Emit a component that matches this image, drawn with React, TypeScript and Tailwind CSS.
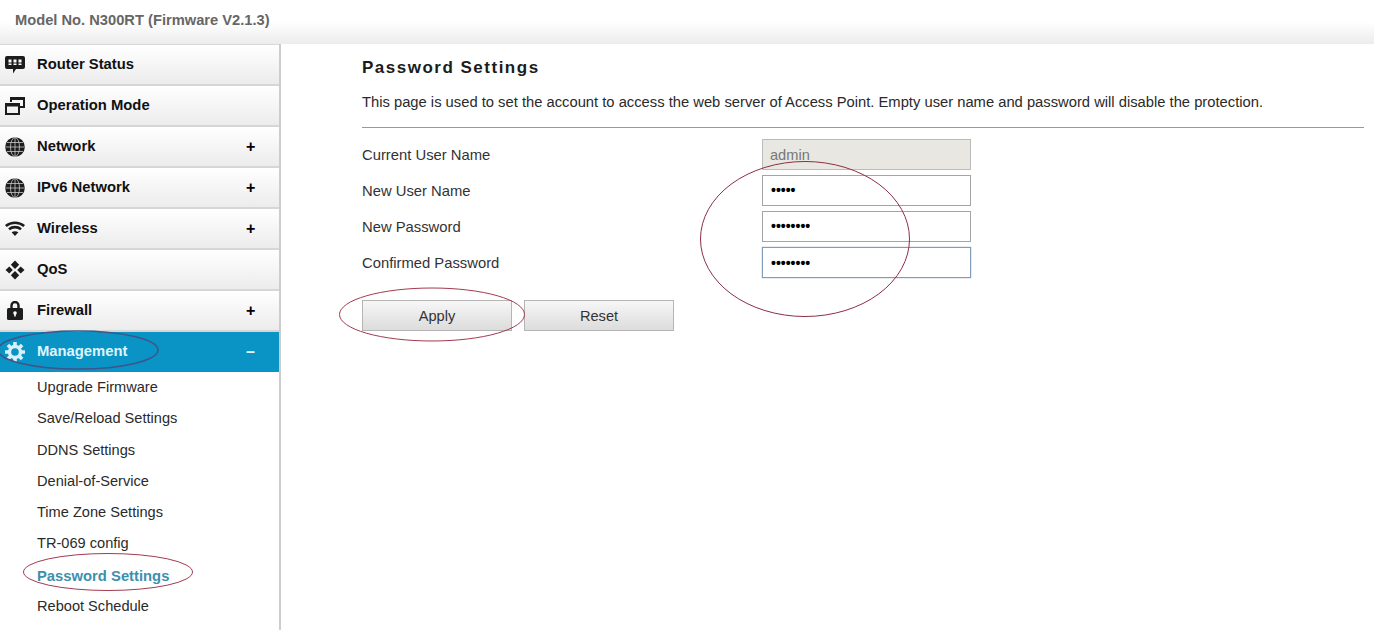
const SANS = "font-['Liberation_Sans',Arial,sans-serif]";

function StatusIcon() {
  return (
    <svg width="20" height="18" viewBox="0 0 20 18">
      <path d="M2 0h16a2 2 0 0 1 2 2v9a2 2 0 0 1-2 2h-7l-3 4.500V13H2a2 2 0 0 1-2-2V2a2 2 0 0 1 2-2z" fill="#1c1c1c" />
      <path d="M3.500 3.500h3v3h-3zM8.500 3.500h3v3h-3zM13.500 3.500h3v3h-3zM3.500 7.500h3v1.500h-3zM8.500 7.500h3v1.500h-3zM13.500 7.500h3v1.500h-3z" fill="#fff" />
    </svg>
  );
}

function ModeIcon() {
  return (
    <svg width="20" height="18" viewBox="0 0 20 18" fill="none" stroke="#1c1c1c">
      <path d="M6 5V1h13v9h-5" strokeWidth="2" />
      <path d="M6 1.500h13" strokeWidth="3" />
      <rect x="1" y="7" width="13" height="10" strokeWidth="2" />
      <path d="M1 8h13" strokeWidth="3" />
    </svg>
  );
}

function GlobeIcon() {
  return (
    <svg width="20" height="20" viewBox="0 0 20 20">
      <circle cx="10" cy="10" r="9.800" fill="#1c1c1c" />
      <g fill="none" stroke="#c9c9c9" strokeWidth="0.800">
        <path d="M10 .5v19M.5 10h19M2 5.500h16M2 14.500h16" />
        <ellipse cx="10" cy="10" rx="4.500" ry="9.500" />
      </g>
    </svg>
  );
}

function WifiIcon() {
  return (
    <svg width="20" height="15" viewBox="0 0 20 15" fill="none" stroke="#1c1c1c" strokeWidth="2.600">
      <path d="M.8 5C6 .6 14 .6 19.200 5" />
      <path d="M4 8.300c3.400-2.900 8.600-2.900 12 0" />
      <path d="M10 15l-3.400-3.700c2-1.300 4.800-1.300 6.800 0z" fill="#1c1c1c" stroke="none" />
    </svg>
  );
}

function QosIcon() {
  return (
    <svg width="20" height="20" viewBox="0 0 20 20" fill="#1c1c1c">
      <path d="M10 .5l4.200 4.200L10 8.900 5.800 4.700z" />
      <path d="M10 11.100l4.200 4.200-4.200 4.200-4.200-4.200z" />
      <path d="M4.300 6.500L7.800 10l-3.500 3.500L.5 10z" />
      <path d="M15.700 6.500l3.800 3.500-3.800 3.500-3.500-3.500z" />
    </svg>
  );
}

function LockIcon() {
  return (
    <svg width="16" height="19" viewBox="0 0 16 19">
      <path d="M4.500 8V4.500a3.500 3.500 0 0 1 7 0V8" fill="none" stroke="#1c1c1c" strokeWidth="2.400" />
      <rect x="0" y="7" width="16" height="12" rx="1.500" fill="#1c1c1c" />
      <circle cx="8" cy="12" r="1.800" fill="#fff" />
      <rect x="7.200" y="12" width="1.600" height="3.500" fill="#fff" />
    </svg>
  );
}

function GearIcon() {
  return (
    <svg width="20" height="20" viewBox="0 0 20 20">
      <circle cx="10" cy="10" r="5.500" fill="none" stroke="#d8f1fa" strokeWidth="3.400" />
      <g stroke="#d8f1fa" strokeWidth="3.600">
        <path d="M10 0v4M10 16v4M0 10h4M16 10h4M2.900 2.900l2.800 2.800M14.300 14.300l2.800 2.800M2.900 17.100l2.800-2.800M14.300 5.700l2.800-2.800" />
      </g>
    </svg>
  );
}

const MENU = [
  { label: "Router Status", icon: <StatusIcon /> },
  { label: "Operation Mode", icon: <ModeIcon /> },
  { label: "Network", icon: <GlobeIcon />, sign: "+" },
  { label: "IPv6 Network", icon: <GlobeIcon />, sign: "+" },
  { label: "Wireless", icon: <WifiIcon />, sign: "+" },
  { label: "QoS", icon: <QosIcon /> },
  { label: "Firewall", icon: <LockIcon />, sign: "+" },
];

const SUB_ITEMS = [
  "Upgrade Firmware",
  "Save/Reload Settings",
  "DDNS Settings",
  "Denial-of-Service",
  "Time Zone Settings",
  "TR-069 config",
  "Password Settings",
  "Reboot Schedule",
];

const FIELDS = [
  { label: "Current User Name", value: "admin", disabled: true },
  { label: "New User Name", value: "•••••" },
  { label: "New Password", value: "••••••••" },
  { label: "Confirmed Password", value: "••••••••", focused: true },
];

export default function App() {
  return (
    <div className={`relative h-[630px] w-[1374px] overflow-hidden bg-white text-[14.6px] text-[#222] ${SANS}`}>
      {/* Top bar */}
      <div className="flex h-[44px] items-start bg-gradient-to-b from-white from-50% to-[#ececec] pl-[15px] pt-[12px] text-[14.7px] font-bold leading-[16px] text-[#666]">
        Model No. N300RT (Firmware V2.1.3)
      </div>

      <div className="flex h-[586px]">
        {/* Sidebar */}
        <div className="w-[281px] shrink-0 border-r-2 border-[#cdcdcd]">
          <div className="h-[1px] bg-[#d8d8d8]" />
          {MENU.map((item) => (
            <div
              key={item.label}
              className="flex h-[41px] items-center border-b-2 border-[#d6d6d6] bg-gradient-to-b from-white to-[#ececec] text-[14.8px] font-bold text-[#111]"
            >
              <span className="flex w-[37px] justify-center pr-[7px]">{item.icon}</span>
              <span className="flex-1">{item.label}</span>
              {item.sign && <span className="w-[33px] text-[16px] text-black">{item.sign}</span>}
            </div>
          ))}
          <div className="flex h-[40px] items-center bg-[#0a93c5] pb-[1px] text-[14.8px] font-bold text-[#dff5fd]">
            <span className="flex w-[37px] justify-center pr-[7px]"><GearIcon /></span>
            <span className="flex-1">Management</span>
            <span className="w-[33px] text-[16px]">–</span>
          </div>
          <div className="pt-[0.5px]">
            {SUB_ITEMS.map((name) => (
              <div
                key={name}
                className={
                  name === "Password Settings"
                    ? "flex h-[31.25px] items-center pl-[37px] text-[14.8px] font-bold text-[#3d90ac]"
                    : "flex h-[31.25px] items-center pl-[37px] text-[#2a2a2a]"
                }
              >
                {name}
              </div>
            ))}
          </div>
        </div>

        {/* Main panel */}
        <div className="flex-1 pl-[81px] pr-[10px]">
          <div className="pt-[14px] text-[17px] font-bold leading-[20px] tracking-[1.5px] text-[#1c1c1c]">
            Password Settings
          </div>
          <p className="pt-[16px] text-[14.75px] leading-[16px] text-[#2a2a2a]">
            This page is used to set the account to access the web server of Access Point. Empty user name and password will disable the protection.
          </p>
          <div className="mt-[17px] h-[1px] bg-[#999]" />

          <div className="mt-[11px] flex flex-col gap-[5px]">
            {FIELDS.map((field) => (
              <div key={field.label} className="flex h-[31px] items-center">
                <span className="w-[400px] pt-[2px] text-[14.8px] text-[#333]">{field.label}</span>
                <div
                  className={
                    field.disabled
                      ? "flex h-[31px] w-[209px] items-center border border-[#bbb] bg-[#e8e7e2] pl-[7px] pt-[2px] text-[#777]"
                      : field.focused
                        ? "flex h-[31px] w-[209px] items-center border border-[#7f9db9] pl-[8px] pt-[1px] text-[14px] font-bold text-black shadow-[0_0_1px_#6f94b8]"
                        : "flex h-[31px] w-[209px] items-center border border-[#a4a4a4] pl-[8px] text-[14px] font-bold text-black"
                  }
                >
                  {field.value}
                </div>
              </div>
            ))}
          </div>

          <div className="mt-[22px] flex gap-[12px]">
            {["Apply", "Reset"].map((label) => (
              <button
                key={label}
                type="button"
                className="h-[31px] w-[150px] border border-[#b5b5b5] bg-gradient-to-b from-[#f7f7f7] to-[#dcdcdc] pt-[2px] text-[#333]"
              >
                {label}
              </button>
            ))}
          </div>
        </div>
      </div>

      {/* Red pen circles drawn over the screenshot */}
      <svg className="pointer-events-none absolute left-0 top-0" width="1374" height="630" fill="none" strokeWidth="1">
        <ellipse cx="805" cy="239" rx="104.5" ry="77.5" stroke="#8c2f45" />
        <ellipse cx="432" cy="314.5" rx="92.5" ry="26.5" stroke="#a23a50" />
        <ellipse cx="108" cy="572" rx="84.5" ry="18.5" stroke="#a23a50" />
        <ellipse cx="78" cy="350" rx="80" ry="19" stroke="#3f5488" strokeWidth="1.5" />
      </svg>
    </div>
  );
}
